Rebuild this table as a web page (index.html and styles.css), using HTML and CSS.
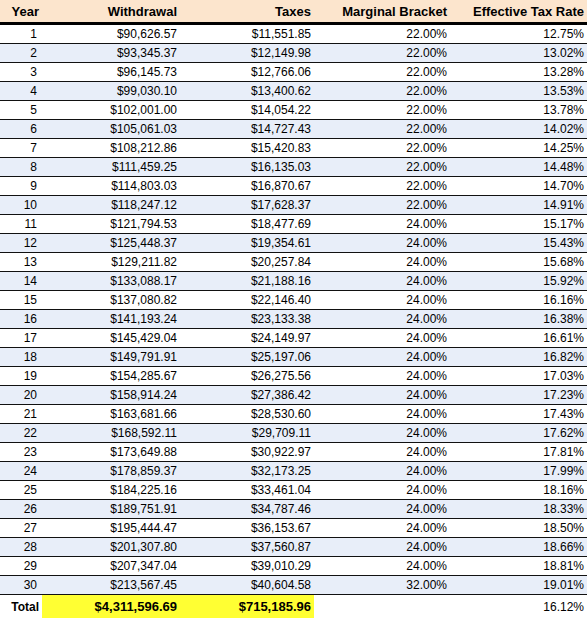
FILE: index.html
```html
<!DOCTYPE html>
<html lang="en">
<head>
    <meta charset="UTF-8">
    <title>Withdrawal Tax Schedule</title>
    <link rel="stylesheet" href="styles.css">
</head>
<body>
    <table class="schedule">
        <colgroup>
            <col class="col-year">
            <col class="col-withdrawal">
            <col class="col-taxes">
            <col class="col-bracket">
            <col class="col-rate">
        </colgroup>
        <thead>
            <tr>
                <th>Year</th>
                <th>Withdrawal</th>
                <th>Taxes</th>
                <th>Marginal Bracket</th>
                <th>Effective Tax Rate</th>
            </tr>
        </thead>
        <tbody>
            <tr><td>1</td><td>$90,626.57</td><td>$11,551.85</td><td>22.00%</td><td>12.75%</td></tr>
            <tr><td>2</td><td>$93,345.37</td><td>$12,149.98</td><td>22.00%</td><td>13.02%</td></tr>
            <tr><td>3</td><td>$96,145.73</td><td>$12,766.06</td><td>22.00%</td><td>13.28%</td></tr>
            <tr><td>4</td><td>$99,030.10</td><td>$13,400.62</td><td>22.00%</td><td>13.53%</td></tr>
            <tr><td>5</td><td>$102,001.00</td><td>$14,054.22</td><td>22.00%</td><td>13.78%</td></tr>
            <tr><td>6</td><td>$105,061.03</td><td>$14,727.43</td><td>22.00%</td><td>14.02%</td></tr>
            <tr><td>7</td><td>$108,212.86</td><td>$15,420.83</td><td>22.00%</td><td>14.25%</td></tr>
            <tr><td>8</td><td>$111,459.25</td><td>$16,135.03</td><td>22.00%</td><td>14.48%</td></tr>
            <tr><td>9</td><td>$114,803.03</td><td>$16,870.67</td><td>22.00%</td><td>14.70%</td></tr>
            <tr><td>10</td><td>$118,247.12</td><td>$17,628.37</td><td>22.00%</td><td>14.91%</td></tr>
            <tr><td>11</td><td>$121,794.53</td><td>$18,477.69</td><td>24.00%</td><td>15.17%</td></tr>
            <tr><td>12</td><td>$125,448.37</td><td>$19,354.61</td><td>24.00%</td><td>15.43%</td></tr>
            <tr><td>13</td><td>$129,211.82</td><td>$20,257.84</td><td>24.00%</td><td>15.68%</td></tr>
            <tr><td>14</td><td>$133,088.17</td><td>$21,188.16</td><td>24.00%</td><td>15.92%</td></tr>
            <tr><td>15</td><td>$137,080.82</td><td>$22,146.40</td><td>24.00%</td><td>16.16%</td></tr>
            <tr><td>16</td><td>$141,193.24</td><td>$23,133.38</td><td>24.00%</td><td>16.38%</td></tr>
            <tr><td>17</td><td>$145,429.04</td><td>$24,149.97</td><td>24.00%</td><td>16.61%</td></tr>
            <tr><td>18</td><td>$149,791.91</td><td>$25,197.06</td><td>24.00%</td><td>16.82%</td></tr>
            <tr><td>19</td><td>$154,285.67</td><td>$26,275.56</td><td>24.00%</td><td>17.03%</td></tr>
            <tr><td>20</td><td>$158,914.24</td><td>$27,386.42</td><td>24.00%</td><td>17.23%</td></tr>
            <tr><td>21</td><td>$163,681.66</td><td>$28,530.60</td><td>24.00%</td><td>17.43%</td></tr>
            <tr><td>22</td><td>$168,592.11</td><td>$29,709.11</td><td>24.00%</td><td>17.62%</td></tr>
            <tr><td>23</td><td>$173,649.88</td><td>$30,922.97</td><td>24.00%</td><td>17.81%</td></tr>
            <tr><td>24</td><td>$178,859.37</td><td>$32,173.25</td><td>24.00%</td><td>17.99%</td></tr>
            <tr><td>25</td><td>$184,225.16</td><td>$33,461.04</td><td>24.00%</td><td>18.16%</td></tr>
            <tr><td>26</td><td>$189,751.91</td><td>$34,787.46</td><td>24.00%</td><td>18.33%</td></tr>
            <tr><td>27</td><td>$195,444.47</td><td>$36,153.67</td><td>24.00%</td><td>18.50%</td></tr>
            <tr><td>28</td><td>$201,307.80</td><td>$37,560.87</td><td>24.00%</td><td>18.66%</td></tr>
            <tr><td>29</td><td>$207,347.04</td><td>$39,010.29</td><td>24.00%</td><td>18.81%</td></tr>
            <tr><td>30</td><td>$213,567.45</td><td>$40,604.58</td><td>32.00%</td><td>19.01%</td></tr>
        </tbody>
        <tfoot>
            <tr>
                <td class="total-label">Total</td>
                <td class="total-sum">$4,311,596.69</td>
                <td class="total-sum">$715,185.96</td>
                <td></td>
                <td>16.12%</td>
            </tr>
        </tfoot>
    </table>
</body>
</html>
```

FILE: styles.css
```css
body {
    margin: 0;
    background: white;
    font-family: "Liberation Sans", Arial, sans-serif;
    color: #000;
}

.schedule {
    width: 587px;
    border-collapse: collapse;
    table-layout: fixed;
}

.col-year { width: 42px; }
.col-withdrawal { width: 138px; }
.col-taxes { width: 134px; }
.col-bracket { width: 136px; }
.col-rate { width: 137px; }

.schedule th,
.schedule td {
    padding: 0 3px 0 0;
    text-align: right;
    white-space: nowrap;
}

.schedule thead th {
    height: 22px;
    background: #fce5cd;
    font-size: 13px;
    font-weight: bold;
    border-bottom: 3px solid #000;
}

.schedule tbody td {
    height: 18px;
    font-size: 12px;
    border-bottom: 1px solid #111;
}

.schedule tbody td:first-child {
    padding-right: 5px;
}

.schedule tbody tr:nth-child(even) td {
    background: #e8eef9;
}

.schedule tfoot td {
    height: 23px;
    font-size: 12px;
}

.schedule tfoot .total-label {
    font-size: 12px;
    font-weight: bold;
}

.schedule tfoot .total-sum {
    background: #ffff33;
    font-size: 13px;
    font-weight: bold;
}
```
